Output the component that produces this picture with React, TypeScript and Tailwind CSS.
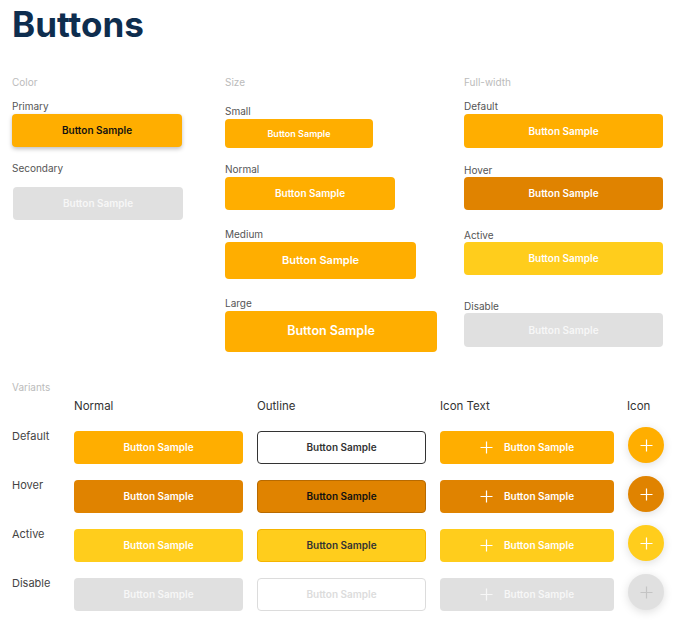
import React from 'react';

const font = { fontFamily: 'Inter, "Noto Sans", sans-serif' };

const Plus = ({ className = '' }: { className?: string }) => (
  <svg width="13" height="13" viewBox="0 0 13 13" className={className}>
    <path d="M6.5 0.5v12M0.5 6.5h12" stroke="currentColor" strokeWidth="1.2" fill="none" />
  </svg>
);

type Tone = 'default' | 'hover' | 'active' | 'disable';

const fill: Record<Tone, string> = {
  default: 'bg-[#ffae00] text-white',
  hover: 'bg-[#e08300] text-white',
  active: 'bg-[#ffcd1c] text-white',
  disable: 'bg-[#e0e0e0] text-[#f7f7f7]',
};

const outline: Record<Tone, string> = {
  default: 'bg-white border-[1.5px] border-[#333] text-[#333]',
  hover: 'bg-[#e08300] border border-[#b86a00] text-[#111]',
  active: 'bg-[#ffcd1c] border border-[#f5b400] text-[#333]',
  disable: 'bg-white border border-[#dcdcdc] text-[#dcdcdc]',
};

const circle: Record<Tone, string> = {
  default: 'bg-[#ffae00] text-white',
  hover: 'bg-[#e08300] text-white',
  active: 'bg-[#ffcd1c] text-white',
  disable: 'bg-[#e0e0e0] text-[#c4c4c4]',
};

const Label = ({ children, className = '' }: { children: React.ReactNode; className?: string }) => (
  <div className={`text-[10px] leading-[14px] text-[#555] ${className}`}>{children}</div>
);

const Category = ({ children, className = '' }: { children: React.ReactNode; className?: string }) => (
  <div className={`text-[10px] leading-[14px] text-[#bbbbbb] ${className}`}>{children}</div>
);

export default function App() {
  const tones: Tone[] = ['default', 'hover', 'active', 'disable'];
  const rowNames = ['Default', 'Hover', 'Active', 'Disable'];

  return (
    <div className="w-[677px] h-[631px] bg-white px-3 overflow-hidden" style={font}>
      <h1 className="pt-[7px] text-[35px] leading-[35px] font-bold text-[#0e2d4e]">Buttons</h1>

      {/* Top section */}
      <div className="grid grid-cols-[213px_239px_1fr] mt-[33px]">
        {/* Color */}
        <div className="flex flex-col items-start">
          <Category>Color</Category>
          <Label className="mt-[10px]">Primary</Label>
          <button className="mt-px w-[170px] h-[33px] rounded-[4px] bg-[#ffae00] text-[#111] text-[10px] font-semibold shadow-[0_2px_4px_rgba(0,0,0,0.25)]">
            Button Sample
          </button>
          <Label className="mt-[14px]">Secondary</Label>
          <button className="mt-[12px] ml-px w-[170px] h-[33px] rounded-[4px] bg-[#e0e0e0] text-[#f7f7f7] text-[10px] font-semibold">
            Button Sample
          </button>
        </div>

        {/* Size */}
        <div className="flex flex-col items-start">
          <Category>Size</Category>
          <Label className="mt-[15px]">Small</Label>
          <button className="mt-px w-[148px] h-[29px] rounded-[4px] bg-[#ffae00] text-white text-[9px] font-semibold">
            Button Sample
          </button>
          <Label className="mt-[14px]">Normal</Label>
          <button className="mt-px w-[170px] h-[33px] rounded-[4px] bg-[#ffae00] text-white text-[10px] font-semibold">
            Button Sample
          </button>
          <Label className="mt-[17px]">Medium</Label>
          <button className="mt-px w-[191px] h-[37px] rounded-[4px] bg-[#ffae00] text-white text-[11px] font-semibold">
            Button Sample
          </button>
          <Label className="mt-[17px]">Large</Label>
          <button className="mt-px w-[212px] h-[41px] rounded-[4px] bg-[#ffae00] text-white text-[12.5px] font-semibold">
            Button Sample
          </button>
        </div>

        {/* Full-width */}
        <div className="flex flex-col items-stretch pr-[2px]">
          <Category>Full-width</Category>
          <Label className="mt-[10px]">Default</Label>
          <button className={`mt-px h-[34px] rounded-[4px] text-[10px] font-semibold ${fill.default}`}>Button Sample</button>
          <Label className="mt-[15px]">Hover</Label>
          <button className={`h-[33px] rounded-[4px] text-[10px] font-semibold ${fill.hover}`}>Button Sample</button>
          <Label className="mt-[18px]">Active</Label>
          <button className={`h-[33px] rounded-[4px] text-[10px] font-semibold ${fill.active}`}>Button Sample</button>
          <Label className="mt-[24px]">Disable</Label>
          <button className={`h-[34px] rounded-[4px] text-[10px] font-semibold ${fill.disable}`}>Button Sample</button>
        </div>
      </div>

      {/* Variants */}
      <Category className="mt-[28px]">Variants</Category>
      <div className="grid grid-cols-[48px_169px_169px_174px_36px] gap-x-[14px] gap-y-[16px] mt-[4px] items-start">
        <div />
        <div className="text-[11.5px] leading-[16px] text-[#333] mb-[1px]">Normal</div>
        <div className="text-[11.5px] leading-[16px] text-[#333]">Outline</div>
        <div className="text-[11.5px] leading-[16px] text-[#333]">Icon Text</div>
        <div className="text-[11.5px] leading-[16px] text-[#333] -ml-px">Icon</div>

        {tones.map((t, i) => (
          <React.Fragment key={t}>
            <div className="text-[11px] leading-[14px] text-[#444] -mt-0.5">{rowNames[i]}</div>
            <button className={`h-[33px] rounded-[4px] text-[10px] font-semibold ${fill[t]}`}>Button Sample</button>
            <button className={`h-[33px] rounded-[4px] text-[10px] font-semibold ${outline[t]}`}>Button Sample</button>
            <button className={`h-[33px] rounded-[4px] text-[10px] font-semibold flex items-center justify-center gap-[11px] ${fill[t]}`}>
              <Plus />
              <span>Button Sample</span>
            </button>
            <button className={`-mt-1 w-[36px] h-[36px] rounded-full flex items-center justify-center shadow-[0_2px_10px_rgba(0,0,0,0.13)] ${circle[t]}`}>
              <Plus />
            </button>
          </React.Fragment>
        ))}
      </div>
    </div>
  );
}
